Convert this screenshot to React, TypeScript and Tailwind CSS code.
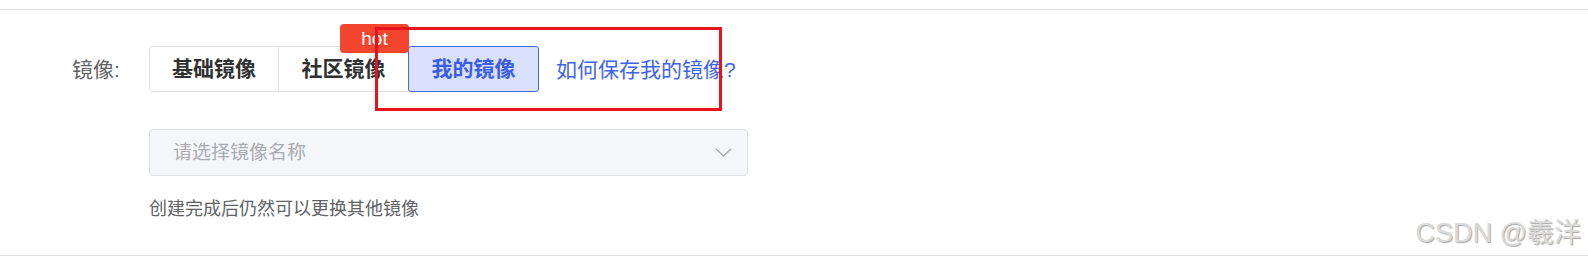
import React from "react";

export default function App() {
  return (
    <div className="relative flex h-[259px] w-full flex-col bg-white font-['Liberation_Sans','Noto_Sans_CJK_SC',sans-serif]">
      <div className="mt-[9px] h-px w-full bg-[#dcdcdc]" />
      <div className="flex pl-[72px] pt-[36px]">
        <div className="flex h-[46px] w-[77px] items-center text-[21px] leading-none text-[#606266]">
          镜像:
        </div>
        <div className="flex flex-col">
          <div className="flex items-center">
            <div className="flex h-[46px]">
              <div className="flex w-[130px] items-center justify-center rounded-l-[4px] border border-[#dcdfe6] text-[21px] font-bold text-[#303133]">
                基础镜像
              </div>
              <div className="relative flex w-[130px] items-center justify-center border-y border-r border-[#dcdfe6] text-[21px] font-bold text-[#303133]">
                社区镜像
                <div className="absolute right-[-1px] top-[-23px] z-20 flex h-[29px] w-[69px] items-center justify-center rounded-[4px] bg-[#f4452f] text-[19px] font-normal leading-none text-white">
                  hot
                </div>
              </div>
              <div className="relative z-10 -ml-px flex w-[131px] items-center justify-center rounded-[3px] border border-[#4068e2] bg-[#d9e0fb] text-[21px] font-bold text-[#3a5ce6]">
                我的镜像
              </div>
            </div>
            <span className="ml-[17px] text-[21px] leading-none text-[#3e63f0]">
              如何保存我的镜像?
            </span>
          </div>
          <div className="mt-[37px] flex h-[47px] w-[599px] items-center justify-between rounded-[4px] border border-[#dcdfe6] bg-[#f5f6fa] pl-[23px] pr-[15px]">
            <span className="text-[19px] leading-none text-[#a8abb2]">请选择镜像名称</span>
            <svg width="17" height="9" viewBox="0 0 17 9" fill="none">
              <path d="M0.8 0.8 L8.5 8 L16.2 0.8" stroke="#a6a9b0" strokeWidth="1.3" />
            </svg>
          </div>
          <div className="mt-[20px] text-[18px] leading-[27px] text-[#606266]">
            创建完成后仍然可以更换其他镜像
          </div>
        </div>
      </div>
      <div className="mb-[3px] mt-auto h-px w-full bg-[#dcdcdc]" />
      <div className="pointer-events-none absolute left-[375px] top-[27px] z-30 h-[84px] w-[347px] border-[3px] border-[#e8141c]" />
      <div className="pointer-events-none absolute right-[7px] top-[220px] text-[27px] leading-none text-[#dadada] [text-shadow:1px_1px_1px_#a8a8a8]">
        CSDN @羲洋
      </div>
    </div>
  );
}
